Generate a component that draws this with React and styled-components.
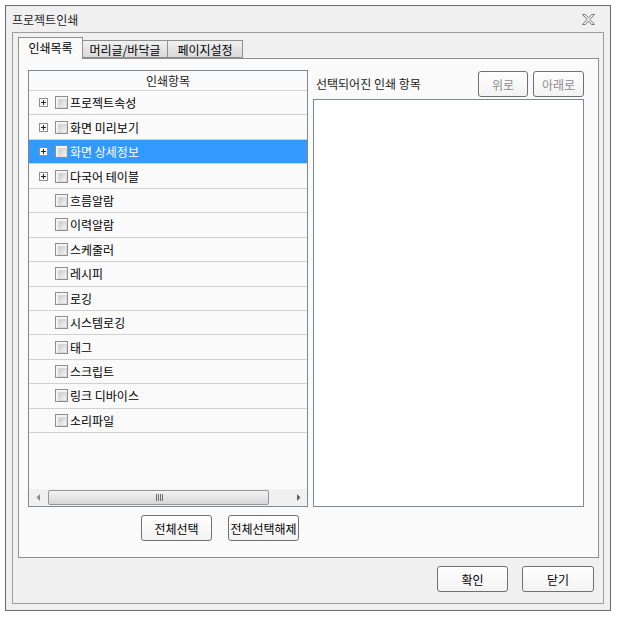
import React from 'react';
import styled, { createGlobalStyle } from 'styled-components';

const Global = createGlobalStyle`
  html, body { margin: 0; padding: 0; background: #ffffff; }
  body {
    font-family: "Noto Sans CJK KR", "Noto Sans", sans-serif;
    font-size: 12px;
    color: #000;
  }
  * { box-sizing: border-box; }
`;

const Window = styled.div`
  width: 606px;
  height: 606px;
  margin: 5px;
  border: 1px solid #6d6d6d;
  background: #f0f0f0;
  display: flex;
  flex-direction: column;
`;

const TitleBar = styled.div`
  height: 26px;
  display: flex;
  align-items: center;
  justify-content: space-between;
  padding: 0 15px 0 6px;
  font-size: 12px;
  color: #1e1e1e;
`;

const Frame = styled.div`
  flex: 1;
  margin: 0 6px 6px 6px;
  border: 1px solid #9d9d9d;
  display: flex;
  flex-direction: column;
  padding: 4px 4px 0 5px;
`;

const Tabs = styled.div`
  display: flex;
  align-items: flex-end;
  height: 21px;
  position: relative;
  z-index: 1;
`;

const Tab = styled.div`
  width: ${(p) => p.$w}px;
  height: ${(p) => (p.$active ? 22 : 18)}px;
  margin-bottom: ${(p) => (p.$active ? -1 : 0)}px;
  margin-left: ${(p) => (p.$first ? 0 : -1)}px;
  border: 1px solid #8e8f8f;
  border-bottom: ${(p) => (p.$active ? 'none' : '1px solid #8e8f8f')};
  background: ${(p) =>
    p.$active ? '#fafafa' : 'linear-gradient(#f0f0f0, #e5e5e5 50%, #d9d9d9)'};
  display: flex;
  align-items: center;
  justify-content: center;
  padding-bottom: ${(p) => (p.$active ? 2 : 0)}px;
  font-size: 12px;
  color: #000;
`;

const Panel = styled.div`
  flex: 0 0 500px;
  border: 1px solid #8e8f8f;
  background: #fafafa;
  display: flex;
  gap: 5px;
  padding: 11px 14px 0 9px;
`;

const LeftCol = styled.div`
  width: 280px;
  display: flex;
  flex-direction: column;
`;

const List = styled.div`
  height: 437px;
  border: 1px solid #828790;
  background: #fafafa;
  display: flex;
  flex-direction: column;
`;

const ListHeader = styled.div`
  height: 20px;
  border-bottom: 1px solid #d5d5d5;
  display: flex;
  align-items: center;
  justify-content: center;
  color: #1a1a1a;
`;

const Row = styled.div`
  height: 24.45px;
  flex: 0 0 24.45px;
  border-bottom: 1px solid #d0d0d0;
  display: flex;
  align-items: center;
  padding-left: 10px;
  background: ${(p) => (p.$selected ? '#3399ff' : 'transparent')};
  color: ${(p) => (p.$selected ? '#ffffff' : '#000000')};
`;

const ExpSlot = styled.div`
  width: 9px;
  height: 9px;
  margin-right: 7px;
  display: flex;
`;

const Check = styled.div`
  width: 13px;
  height: 13px;
  border: 1px solid #8e8f8f;
  padding: 2px;
  background: #f4f4f4;
  margin-right: 2px;
  &::after {
    content: '';
    display: block;
    width: 100%;
    height: 100%;
    background: linear-gradient(135deg, #cbcbcb, #f6f6f6);
    border: 1px solid #d8d8d8;
  }
`;

const Filler = styled.div`
  flex: 1;
`;

const HScroll = styled.div`
  height: 17px;
  flex: 0 0 17px;
  background: #f0f0f0;
  display: flex;
  align-items: center;
`;

const ArrowBtn = styled.div`
  width: 17px;
  height: 17px;
  display: flex;
  align-items: center;
  justify-content: center;
`;

const Track = styled.div`
  flex: 1;
  height: 17px;
  display: flex;
  align-items: center;
  padding-left: 2px;
`;

const Thumb = styled.div`
  width: 221px;
  height: 15px;
  border: 1px solid #979797;
  border-radius: 2px;
  background: linear-gradient(#f3f3f3, #e6e6e6 50%, #d6d6d6);
  display: flex;
  align-items: center;
  justify-content: center;
`;

const ButtonRow = styled.div`
  display: flex;
  justify-content: flex-end;
  gap: 16px;
  padding-right: 9px;
  margin-top: 8px;
`;

const Button = styled.button`
  width: ${(p) => p.$w}px;
  height: ${(p) => p.$h || 26}px;
  border: 1px solid #707070;
  border-radius: 3px;
  background: linear-gradient(#fefefe, #f3f3f3);
  font-family: "Noto Sans CJK KR", "Noto Sans", sans-serif;
  font-size: 12px;
  color: ${(p) => (p.$disabled ? '#8a8a8a' : '#000')};
  padding: 0;
  display: flex;
  align-items: center;
  justify-content: center;
`;

const RightCol = styled.div`
  flex: 1;
  display: flex;
  flex-direction: column;
`;

const RightHeader = styled.div`
  height: 29px;
  display: flex;
  align-items: flex-start;
  padding-top: 1px;
`;

const RightLabel = styled.div`
  flex: 1;
  padding: 4px 0 0 3px;
  color: #1a1a1a;
`;

const SmallButtons = styled.div`
  display: flex;
  gap: 5px;
`;

const RightList = styled.div`
  height: 408px;
  border: 1px solid #828790;
  background: #ffffff;
`;

const Footer = styled.div`
  flex: 1;
  display: flex;
  justify-content: flex-end;
  align-items: flex-start;
  gap: 14px;
  padding: 8px 5px 0 0;
`;

const CloseIcon = () => (
  <svg width="13" height="11" viewBox="0 0 13 11">
    <polygon
      points="0.5,0.5 3.5,0.5 6.5,4 9.5,0.5 12.5,0.5 8,5.5 12.5,10.5 9.5,10.5 6.5,7 3.5,10.5 0.5,10.5 5,5.5"
      fill="none"
      stroke="#7a7a7a"
      strokeWidth="1"
    />
  </svg>
);

const Expander = () => (
  <svg width="9" height="9" viewBox="0 0 9 9">
    <rect x="0.5" y="0.5" width="8" height="8" fill="#f7f7f7" stroke="#8f8f8f" />
    <path d="M2 4.5h5M4.5 2v5" stroke="#222" strokeWidth="1" />
  </svg>
);

const LeftArrow = () => (
  <svg width="4" height="7" viewBox="0 0 4 7">
    <polygon points="4,0 4,7 0.5,3.5" fill="#8a8a8a" />
  </svg>
);

const RightArrow = () => (
  <svg width="4" height="7" viewBox="0 0 4 7">
    <polygon points="0,0 0,7 3.5,3.5" fill="#606060" />
  </svg>
);

const Grip = () => (
  <svg width="8" height="7" viewBox="0 0 8 7">
    <path d="M1.5 0v7M3.5 0v7M5.5 0v7M7.5 0v7" stroke="#6a6a6a" strokeWidth="1" />
  </svg>
);

const items = [
  { label: '프로젝트속성', exp: true },
  { label: '화면 미리보기', exp: true },
  { label: '화면 상세정보', exp: true, selected: true },
  { label: '다국어 테이블', exp: true },
  { label: '흐름알람' },
  { label: '이력알람' },
  { label: '스케줄러' },
  { label: '레시피' },
  { label: '로깅' },
  { label: '시스템로깅' },
  { label: '태그' },
  { label: '스크립트' },
  { label: '링크 디바이스' },
  { label: '소리파일' },
];

export default function App() {
  return (
    <>
      <Global />
      <Window>
        <TitleBar>
          <span>프로젝트인쇄</span>
          <CloseIcon />
        </TitleBar>
        <Frame>
          <Tabs>
            <Tab $w={65} $first $active>인쇄목록</Tab>
            <Tab $w={86}>머리글/바닥글</Tab>
            <Tab $w={76}>페이지설정</Tab>
          </Tabs>
          <Panel>
            <LeftCol>
              <List>
                <ListHeader>인쇄항목</ListHeader>
                {items.map((it) => (
                  <Row key={it.label} $selected={it.selected}>
                    <ExpSlot>{it.exp && <Expander />}</ExpSlot>
                    <Check />
                    <span>{it.label}</span>
                  </Row>
                ))}
                <Filler />
                <HScroll>
                  <ArrowBtn>
                    <LeftArrow />
                  </ArrowBtn>
                  <Track>
                    <Thumb>
                      <Grip />
                    </Thumb>
                  </Track>
                  <ArrowBtn>
                    <RightArrow />
                  </ArrowBtn>
                </HScroll>
              </List>
              <ButtonRow>
                <Button $w={71}>전체선택</Button>
                <Button $w={71}>전체선택해제</Button>
              </ButtonRow>
            </LeftCol>
            <RightCol>
              <RightHeader>
                <RightLabel>선택되어진 인쇄 항목</RightLabel>
                <SmallButtons>
                  <Button $w={50} $h={26} $disabled>위로</Button>
                  <Button $w={51} $h={26} $disabled>아래로</Button>
                </SmallButtons>
              </RightHeader>
              <RightList />
            </RightCol>
          </Panel>
          <Footer>
            <Button $w={71}>확인</Button>
            <Button $w={72}>닫기</Button>
          </Footer>
        </Frame>
      </Window>
    </>
  );
}
